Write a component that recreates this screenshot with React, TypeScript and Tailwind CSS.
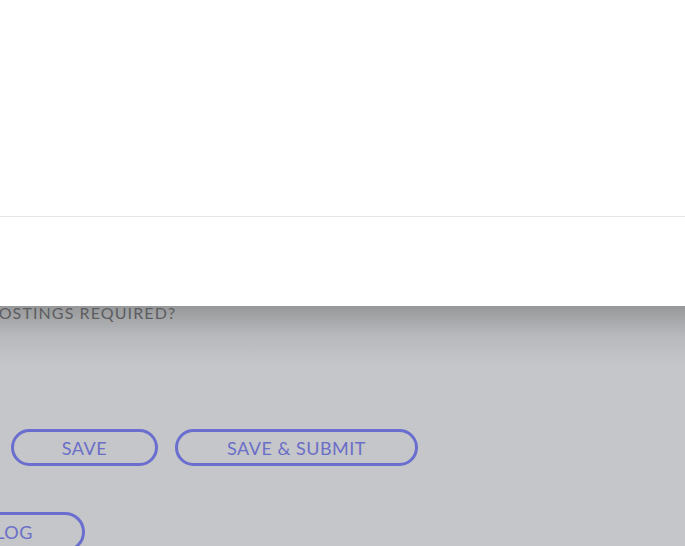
const font = { fontFamily: "Lato, 'Noto Sans', sans-serif" };

function PillButton({ label, className }: { label: string; className?: string }) {
  return (
    <button
      className={`flex h-[37px] items-center justify-center rounded-full border-[3px] border-[#6a6ecf] text-[18px] leading-none tracking-[0.5px] text-[#6a6ec8] ${className ?? ""}`}
    >
      {label}
    </button>
  );
}

export default function App() {
  return (
    <div className="flex h-[546px] w-[685px] flex-col overflow-hidden bg-[#c5c6c9]" style={font}>
      <div className="flex h-[306px] shrink-0 flex-col bg-white">
        <div className="h-[216px]" />
        <div className="h-px bg-[#e6e6e6]" />
      </div>

      <div className="flex flex-1 flex-col bg-[linear-gradient(to_bottom,#97989a,#b8b9bc_30px,#c5c6c9_60px)]">
        <p className="-ml-[12px] -mt-[2px] whitespace-nowrap text-[16px] leading-[18px] tracking-[1.1px] text-[#5c5d60]">
          POSTINGS REQUIRED?
        </p>

        <div className="mt-[107px] flex gap-[17px] pl-[11px]">
          <PillButton label="SAVE" className="w-[147px]" />
          <PillButton label="SAVE & SUBMIT" className="w-[243px]" />
        </div>

        <div className="mt-[46px] flex">
          <PillButton label="VIEW LOG" className="-ml-[110px] h-[40px] px-[49px]" />
        </div>
      </div>
    </div>
  );
}
